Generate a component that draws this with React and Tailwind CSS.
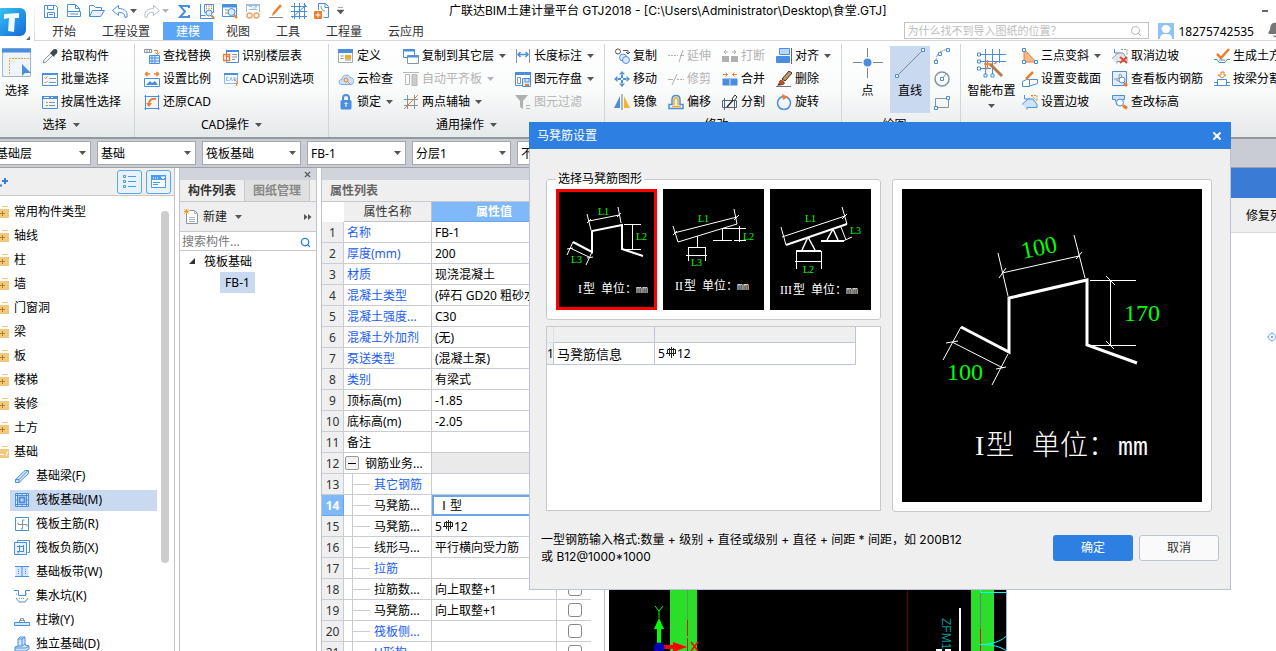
import React from "react";
import { Search, X, Bell } from "lucide-react";

const B = "#4a8fdf";
const O = "#ee7d2c";
const G = "#87949e";

const icons = {
  save: <g stroke={B} fill="none"><path d="M1.5 2.5h11l2 2v10h-13z" /><path d="M4.5 2.5v4h6v-4M4.5 14.5v-5h7v5M6 11.5h4" /></g>,
  doc: <g stroke={B} fill="none"><path d="M1.5 8.5v-7h8l4 4v3M9.5 1.5v4h4M1.5 8.5h13v5h-13zM4 11h8" /></g>,
  open: <g stroke={B} fill="none"><path d="M.5 13.5v-11h4l2 2h6v3" /><path d="M.5 13.5l3-6h12l-4 6z" fill="#e8f2fd" /></g>,
  undo: <path d="M6.5 2.5l-6 5 6 5v-3c4-.5 6 1 6.5 5l2-.5c1-5-2-8.5-8.5-8.5z" stroke={B} fill="none" />,
  redo: <path d="M9.5 2.5l6 5-6 5v-3c-4-.5-6 1-6.5 5l-2-.5c-1-5 2-8.5 8.5-8.5z" stroke="#b9bec4" fill="none" />,
  sum: <path d="M13 5V3H4l5 5.5L4 14h9v-2" stroke={B} strokeWidth="2" fill="none" />,
  gridFind: <g fill="none" stroke={B}><path d="M1.5 1v14.5h14M1.5 12.5h5M5.5 1.5h9v8h-9z" /><path d="M7 3h1M9.5 3h1M12 3h1M7 5.5h1M9.5 5.5h1M12 5.5h1" stroke={O} strokeWidth="1.5" /><circle cx="10" cy="10" r="3" fill="#dbe9f9" /><path d="M12.5 12.5l2.5 2.5" stroke={O} strokeWidth="2" /></g>,
  winFind: <g fill="none" stroke={B}><path d="M.5 1.5h14v12H.5z" /><path d="M.5 3h14" strokeWidth="3" /><path d="M3 7h3M3 10h3" stroke={G} /><circle cx="9.5" cy="9" r="3.5" fill="#dbe9f9" /><path d="M12 12l3 3" stroke={O} strokeWidth="2" /></g>,
  glasses: <g fill="none" stroke="#9dbfe6"><path d="M1.5 9V1.5h13V9M4 3.5h3M10 3.5h2M7.5 5h4M4 6.5h8" /><path d="M1 2h14" strokeWidth="2" /><g stroke="#f0a36a" strokeWidth="1.5"><circle cx="4.5" cy="12.5" r="2.5" /><circle cx="11.5" cy="12.5" r="2.5" /></g></g>,
  pen: <g fill="none"><path d="M1 14.5h14" stroke="#888" /><path d="M6 10l7-8" stroke={O} strokeWidth="2.5" /><path d="M4 13l3-2-2-2z" fill={O} /></g>,
  hatch: <g stroke={B} fill="none"><path d="M3.5 0v16M8.5 0v16M13.5 0v16M0 3.5h16M0 8.5h16M0 13.5h16M1 15L15 2" /></g>,
  docPlus: <g fill="none" stroke={B}><path d="M4.5 7V.5h7l3 3v11h-5" /><path d="M11 .5v4h4" /><path d="M7 3c0 3 1 4 4 5" stroke={G} /><path d="M.5 8.5h7v7h-7z" fill={O} stroke={O} /><path d="M4 9.5v5M1.5 12h5" stroke="#fff" /></g>,
  dropper: <g><path d="M1 15l1-3 7-7 2 2-7 7z" fill="#f5f7f8" stroke="#8b979f" /><path d="M8 5l4 4 1-2c2-1 3-3 2-5s-4-1-5 1z" fill="#3e4a54" /></g>,
  batch: <g fill="none" stroke={B}><path d="M.5 2.5h15v12H.5z" /><path d="M0 3h16" strokeWidth="2" /><path d="M2.5 6.5l1 1 2-2M2.5 11l1 1 2-2" stroke={O} /><path d="M7 7.5h7M7 11.5h7" stroke={G} /></g>,
  props: <g fill="none" stroke={B}><path d="M.5 2.5h15v12H.5z" /><path d="M0 3.5h16" strokeWidth="3" /><path d="M2 3.5h5M9 3.5h2" stroke="#fff" /><path d="M4 8.5h2M7 8.5h6M4 11.5h2M7 11.5h6" stroke={G} /></g>,
  replace: <g fill="none" stroke={B}><path d="M.5 1.5h7v3h-7zM3 1.5v3M5.5 1.5v3" stroke={G} /><path d="M10 2.5h3.5v3M11.5 4.5l2 2 2-2" stroke={O} /><path d="M5.5 7.5h10v8h-10zM8 7.5v8M11 7.5v8M5.5 10h10M5.5 13h10" fill="#dceafa" /></g>,
  floorTable: <g fill="none" stroke={B}><path d="M3.5 2.5h12v12h-12z" fill="#fff" /><path d="M3 3h13" strokeWidth="2" /><path d="M9 6.5h5M9 9h5M9 11.5h3" stroke={G} /><path d="M.5 6.5h6v6h-6zM2.5 8.5h4" stroke={O} strokeWidth="1.5" /></g>,
  scale: <g fill="none"><path d="M1 3h5M10 3h5M3.5 1L1.5 3l2 2M12.5 1l2 2-2 2" stroke={O} strokeWidth="1.5" /><path d="M.5 7.5h15v8H.5z" stroke={B} /><path d="M2 14l4-4 2 2 3-2 3 4z" fill={B} /></g>,
  cadOption: <g fill="none" stroke="#8db8ea"><path d="M1.5 2.5h13v10h-13z" /><path d="M1 3h14" stroke={B} strokeWidth="2" /><path d="M5.5 6.5h-2v3h2M6.5 10l1.5-3.5L9.5 10M11 6.5v3c3 0 3-3 0-3" /><path d="M11 8l4 4-2 .5 1 2.5" stroke={O} /></g>,
  restore: <g fill="none"><path d="M1.5 2.5h13v12h-13zM.5 2.5h15M1.5 1v15M14.5 1v15M.5 14.5h15" stroke={B} /><path d="M5 10c0-4 3-6 7-5" stroke={O} strokeWidth="2" /><path d="M2 9h6l-3 4z" fill={O} /></g>,
  define: <g fill="none" stroke={B}><path d="M.5 1.5h14v13H.5z" stroke="#9aa8b3" fill="#fff" /><path d="M0 3h15" strokeWidth="4" /><path d="M2.5 8h3M2.5 10.5h3M7 12h6" stroke={G} /><path d="M7 7h6v4H7z" fill="#f5a623" stroke="none" /></g>,
  cloud: <g><path d="M4 13.500c-4 0-4-5 0-5 0-5 7-6 8-2 5 0 5 6 1 7z" fill="#cfe1f8" stroke="#7aaceb" /><circle cx="8" cy="9" r="2" fill="none" stroke={O} /><path d="M9.5 10.5l3 3" stroke={O} /></g>,
  lock: <g><path d="M5 7V4c0-4 6-4 6 0v3" fill="none" stroke={B} strokeWidth="2" /><rect x="2.5" y="6" width="11" height="9.5" rx="1.5" fill={B} /><path d="M8 9v4M6.5 10L8 8.5 9.5 10" stroke="#fff" fill="none" /></g>,
  layers: <g fill="none"><path d="M.5 1.5h11v8H.5z" stroke={B} fill="#fff" /><path d="M0 2.5h12" stroke={B} strokeWidth="2" /><path d="M4.5 7.5h11v8h-11z" stroke={G} fill="#fff" /><path d="M4 8.5h12" stroke={B} strokeWidth="2" /></g>,
  alignGray: <g stroke="#b8b8b8" fill="none"><path d="M0 1.5h16M2.5 3.5h4v10h-4z" /><path d="M9 3.5h5v11H9z" fill="#ccc" /></g>,
  twoAxis: <g fill="none" stroke={G}><path d="M4.5 1v14M11.5 1v14M1 5.5h14M1 11.5h14" /><path d="M1 15L15 1" stroke={O} /></g>,
  dimension: <g fill="none"><path d="M1.5 1v14M14.5 1v14" stroke={G} /><path d="M4 6.5h8M5.5 4L3 6.5 5.5 9M10.5 4L13 6.5 10.5 9" stroke={B} strokeWidth="1.5" /></g>,
  store: <g fill="none" stroke={B}><path d="M.5 1.5h15v13H.5z" fill="#fff" /><path d="M0 2.5h16" strokeWidth="3" /><path d="M2.5 6.5h3v6h-3z" stroke={G} /><path d="M7.5 7.5h8v8h-8z" fill="#dceafa" /><path d="M10 8v3h4V8" /><path d="M10 13h4v2h-4z" fill={O} stroke="none" /></g>,
  filter: <g fill="#b0b0b0"><path d="M0 1h13l-5 6v8l-3-2V7z" /><path d="M11 11h4v1h-4zM11 14h4v1h-4z" /></g>,
  copy: <g fill="#fff" stroke="#555"><circle cx="4" cy="3.5" r="2.5" /><path d="M9 2.5h5v3M12 4l2 2 2-2" fill="none" /><g fill="#dceafa" stroke={B}><circle cx="9" cy="9.5" r="3.5" /><circle cx="12" cy="12" r="3.5" /></g></g>,
  move: <g fill={B}><path d="M8 0l3 3.5H5zM8 16l3-3.5H5zM0 8l3.5-3v6zM16 8l-3.5-3v6zM7 4h2v3H7zM7 9h2v3H7zM4 7h3v2H4zM9 7h3v2H9z" /></g>,
  mirror: <g><path d="M6 2v12H0z" fill={B} /><path d="M10 2v12h6z" fill="#f5b32e" /><path d="M8 0v16" stroke="#777" /></g>,
  extend: <g stroke="#b0b0b0" fill="none"><path d="M0 7.5h10" strokeDasharray="2 1" /><path d="M15 2l-4 12M12 7.5h4" /></g>,
  trim: <g stroke="#b0b0b0" fill="none"><path d="M0 8.5h5" /><path d="M9 8.5h7" strokeDasharray="2 1" /><path d="M4 14l5-11" /></g>,
  offset: <g fill="none" strokeWidth="1.5"><path d="M1 14.5h14v-4h-3V6c0-6-8-6-8 0v4.5H1z" stroke={B} /><path d="M4 12.5h9M6 11V6c0-3 4-3 4 0v5" stroke="#f5a623" /></g>,
  breakGray: <g fill="#b0b0b0"><path d="M0 8h7v6H0zM9 8h7v6H9z" /><path d="M2 4h4M10 4h4M4 2L2 4l2 2M12 2l2 2-2 2" stroke="#b0b0b0" fill="none" /></g>,
  merge: <g><path d="M.5 7.5h15v7H.5z" fill={B} /><path d="M8 8v6" stroke="#d9e8fa" /><path d="M1 3.5h4M11 3.5h4M3.5 1.5l2 2-2 2M12.5 1.5l-2 2 2 2" stroke={O} fill="none" /></g>,
  split: <g fill="none"><path d="M.5 6.5h14v7H.5zM2.5 4v12M12.5 6v10" stroke="#50657f" /><path d="M5 13l7-8" stroke="#333" strokeWidth="1.5" /><path d="M10 5l3-4 2 2-3 4z" fill="#fff" stroke="#333" /></g>,
  alignTo: <g><path d="M3.5.5h10v6h-10z" fill="#b9d7fa" stroke={B} /><path d="M.5 8.5h13v6H.5z" fill={B} stroke={B} /><path d="M15.5 0v16" stroke="#666" /></g>,
  brush: <g><path d="M6 8l7-8 3 2-7 8z" fill="#c9975a" stroke="#333" /><path d="M5 9l4 3c-1 2-4 2.500-8 2.500 2-1 2-5 4-5.500z" fill="#33312f" /><circle cx="5.5" cy="11.5" r="2.5" fill="#bd4d21" /><path d="M0 15.5h15" stroke="#777" /></g>,
  rotate: <g fill="none"><circle cx="8" cy="9" r="6.5" stroke={B} strokeWidth="1.5" /><path d="M6 0l6 3-5 3z" fill={O} /></g>,
  arc: <g fill="none" stroke={G}><path d="M2 14C2 6 6 2 14 1.5" strokeDasharray="4 1" /><path d="M.5 12.5h3v3h-3zM4.5 4.5h3v3h-3zM12.5.5h3v3h-3z" stroke={B} fill="#fff" /></g>,
  circle: <g fill="none" stroke={G}><circle cx="8" cy="8" r="7" strokeWidth="1.5" /><path d="M8 8l4-5" /><path d="M6.5 6.5h3v3h-3z" stroke={B} fill="#fff" /></g>,
  rect: <g fill="none" stroke={G}><path d="M1.5 4.5h13v9h-13z" /><path d="M.5 12.5h3v3h-3zM12.5 2.5h3v3h-3z" stroke={B} fill="#fff" /></g>,
  slope3: <g fill="none" stroke={B}><path d="M2 1v13h12z" fill="#f6b68b" stroke={O} /><path d="M.5.5h3v3h-3zM.5 12.5h3v3h-3zM12.5 12.5h3v3h-3z" fill="#fff" /></g>,
  section: <g fill="none" stroke={B}><path d="M.5 15.5v-5l4-2h3v7zM8 8.5h7.5v4L8 15" /><path d="M4 8l7-7" stroke={O} strokeWidth="2.5" /></g>,
  slopeSet: <g fill="none" stroke={B}><path d="M2.5 1v4h6" /><path d="M0 10.5l6-5.500h5l4 5.500v3H5v2" fill="#cfe2f8" /><path d="M9 1.5h6v6M9 1.5l6 5" stroke={O} strokeDasharray="2 1" /></g>,
  slopeCancel: <g fill="none" stroke={B}><path d="M2.5 1v4h6" /><path d="M0 10.5l6-5.500h5l4 5.500v3H5v2" stroke={G} fill="#e2e5e8" /><path d="M9 1.5h6v6" stroke={G} strokeDasharray="2 1" /><path d="M8 9l7 6M15 9l-7 6" stroke="#dc4a32" strokeWidth="2" /></g>,
  viewRebar: <g fill="none" stroke={B}><path d="M.5.5h14v14H.5z" fill="#e6f0fb" /><path d="M2 8h4c2 0 0-5 2-5s2 5 0 7c-2 1-3-1-4-1" stroke={G} /><circle cx="10" cy="9" r="3" fill="#fff" /><path d="M12 12l3 3" stroke={O} strokeWidth="3" /></g>,
  elevation: <g fill="none" stroke={B}><path d="M.5 1.5h12v4h-2l-1 5h-5l-1-5h-3z" fill="#cfe2f8" /><circle cx="8" cy="8.5" r="3.5" fill="#fff" /><path d="M11 11.5l4 3" stroke={O} strokeWidth="3" /></g>,
  earthwork: <g fill="none"><path d="M3 6l4 4 8-9" stroke={O} strokeWidth="2.5" /><path d="M0 11.5h3l2 3h6l2-3h3M5 12h6" stroke={B} /></g>,
  beamSplit: <g fill="none" stroke={B}><path d="M3.5 8.5h9v6h-9zM0 11.5h3M13 11.5h3M0 14.5h16" /><path d="M7 1h3v3h2l-4 3-4-3h3z" stroke={O} /></g>,
  beamF: <g fill="#d5e6fa" stroke={B}><path d="M1.5 11.500L11 2.500h3.500v3L5 14.500H1.5z" /><path d="M1.5 11.500H5v3M5 11.500l9-9" fill="none" /></g>,
  raft: <g fill="none" stroke={B}><path d="M1.5 1.5h13v13h-13z" fill="#d5e6fa" /><path d="M5.5 5.5h5v5h-5z" strokeWidth="2" fill="#c9d9f0" /><path d="M3.5 1v14M12.5 1v14M1 3.5h14M1 12.5h14" /><path d="M8 1v3M8 12v3M1 8h3M12 8h3" /></g>,
  mainRebar: <g fill="none" stroke={B}><path d="M1.5 1.5h13v13h-13z" /><path d="M4 8.500h9M8.500 4v9M8.500 4h2M8.500 13h-2M4 8.500v-2M13 8.500v2" stroke={G} /></g>,
  negRebar: <g fill="#e8f2fd" stroke={B}><path d="M3.5 2.500V.5h12v12h-2" fill="none" /><path d="M.5 2.5h12v12H.5z" /><path d="M3 6.500h7M3 11.500h7M5.500 5v6c0 1-1 2-2 2M9.500 5v7" fill="none" /></g>,
  strip: <g fill="#d5e6fa" stroke={B}><path d="M1.5 3h13v10h-13z" stroke="none" /><path d="M1 2.5h14M1 12.5h14M8 3v10" /><path d="M4.5 5v6M11.5 5v6" strokeDasharray="1 1" /></g>,
  pit: <g fill="none" stroke={B}><path d="M0 2.5h4.5v5h7v-5H16M2 10l3 4h6l3-4" /><path d="M2 6h2M12 6h2M5 10.500h6" stroke={G} strokeDasharray="1 1" /></g>,
  pier: <g fill="none" stroke={B}><path d="M.5 10.5h15v3H.5z" fill="#d5e6fa" /><path d="M5.500 10V8.500h5V10M6.500 8.500v-2h3v2" stroke={G} /></g>,
  isolated: <g fill="#d5e6fa" stroke={B}><path d="M1 11l3-1V3l2-2h5v8l4 1v3l-3 2H1z" /><path d="M4 10h4l3-2M8 3v7M4 3h4l3-2M1 12h11l3-2" fill="none" /></g>,
};

function Icon({ name, className = "h-4 w-4" }) {
  return (
    <svg viewBox="0 0 16 16" className={`${className} shrink-0`} aria-hidden="true">
      {icons[name]}
    </svg>
  );
}

function Caret({ light }) {
  return (
    <svg viewBox="0 0 7 4" className="h-1 w-[7px] shrink-0" aria-hidden="true">
      <path d="M0 0h7L3.5 4z" fill={light ? "#b5b5b5" : "#555"} />
    </svg>
  );
}

function Tool({ icon, label, caret, disabled }) {
  return (
    <button
      disabled={disabled}
      className="flex h-[23px] items-center gap-[3px] whitespace-nowrap text-black disabled:text-[#b3b3b3]"
    >
      <Icon name={icon} />
      <span>{label}</span>
      {caret && <span className="ml-[2px] flex"><Caret light={disabled} /></span>}
    </button>
  );
}

function Group({ label, className, children }) {
  return (
    <section className={`flex shrink-0 flex-col border-r border-[#d3d6d9] ${className}`}>
      <div className="flex h-[69px]">{children}</div>
      <button className="flex h-[25px] items-center justify-center gap-[6px]">
        {label}
        {label && <Caret />}
      </button>
    </section>
  );
}

const tabs = ["开始", "工程设置", "建模", "视图", "工具", "工程量", "云应用"];

function Header() {
  return (
    <header className="flex h-[41px] shrink-0 bg-white">
      <div className="relative w-[35px] shrink-0">
        <svg viewBox="0 0 35 41" className="h-[41px] w-[35px]" aria-hidden="true">
          <defs>
            <linearGradient id="logo" x1="0" y1="0" x2="1" y2="1">
              <stop offset="0" stopColor="#35c8f5" />
              <stop offset="1" stopColor="#1668d8" />
            </linearGradient>
            <linearGradient id="edge" x1="0" y1="0" x2="0" y2="1">
              <stop offset="0" stopColor="#fff" />
              <stop offset="1" stopColor="#d5d7da" />
            </linearGradient>
          </defs>
          <rect x="-4" y="8" width="30" height="28" rx="6" fill="url(#logo)" />
          <path d="M4 14l15-1v5h-4l-1 14-6-1 1-13-5 1z" fill="#eef9ff" />
          <path d="M30 36v4h-4z" fill="#666" />
          <rect x="34" y="0" width="1" height="41" fill="url(#edge)" />
        </svg>
      </div>
      <div className="flex min-w-0 flex-1 flex-col">
        <div className="flex h-[21px] shrink-0 items-center pl-2">
          <div className="flex items-center gap-[7px]">
            <Icon name="save" />
            <Icon name="doc" />
            <Icon name="open" />
            <Icon name="undo" />
            <span className="-ml-[5px] flex"><Caret /></span>
            <Icon name="redo" />
            <span className="-ml-[5px] flex"><Caret light /></span>
            <Icon name="sum" />
            <Icon name="gridFind" />
            <Icon name="winFind" />
            <Icon name="glasses" />
            <Icon name="pen" />
            <Icon name="hatch" />
            <Icon name="docPlus" />
            <svg viewBox="0 0 7 7" className="h-[7px] w-[7px]" aria-hidden="true">
              <path d="M1 .5h5M0 3h7L3.5 7z" fill="#555" stroke="#555" strokeWidth=".5" />
            </svg>
          </div>
          <h1 className="ml-[105px] font-['Inter','Noto_Sans_CJK_SC',sans-serif] whitespace-nowrap">
            广联达BIM土建计量平台 GTJ2018 - [C:\Users\Administrator\Desktop\食堂.GTJ]
          </h1>
          <button aria-label="最小化" className="mr-2 ml-auto h-[2px] w-[6px] bg-[#666]" />
        </div>
        <div className="flex h-5 shrink-0 items-end border-b border-[#d5d7da] pl-1">
          <nav className="flex">
            {tabs.map((t) => (
              <a
                key={t}
                href="#"
                className={`flex h-[18px] items-center px-[13px] pt-[2px] ${t === "建模" ? "bg-[#5ba5f7] text-white" : "text-[#333]"}`}
              >
                {t}
              </a>
            ))}
          </nav>
          <label className="mb-px ml-auto flex h-[17px] w-[245px] items-center border border-[#c4c4c4] px-[2px]">
            <input
              aria-label="搜索"
              placeholder="为什么找不到导入图纸的位置？"
              className="min-w-0 flex-1 text-[11px] leading-[15px] outline-none placeholder:text-[#bdbdbd]"
            />
            <Search className="mr-1 h-3 w-3 text-[#b5b5b5]" />
          </label>
          <svg viewBox="0 0 16 16" className="mb-px ml-[9px] h-4 w-4 shrink-0" aria-hidden="true">
            <path d="M0 0h16v16H0z" fill="#8fc3f7" />
            <circle cx="8" cy="6" r="4" fill="#fff" />
            <path d="M3 5h10v1H3zM2 16c0-4 2-5 6-5s6 1 6 5z" fill="#fff" />
          </svg>
          <span className="ml-1 leading-[17px]">18275742535</span>
          <span className="ml-[13px] w-[9px] overflow-hidden pb-[2px]">
            <Bell className="h-4 w-4 fill-[#777] text-[#777]" />
          </span>
        </div>
      </div>
    </header>
  );
}

function Ribbon() {
  return (
    <div className="flex h-[98px] shrink-0 overflow-hidden border-b-2 border-[#94989d] bg-linear-to-b from-white via-[#fafbfb] to-[#e6e9ea] pt-[3px]">
      <Group label="选择" className="w-[135px] pr-3">
        <button className="flex w-[42px] shrink-0 flex-col items-start gap-[5px] pt-1 pl-[2px]">
          <svg viewBox="0 0 30 30" className="h-[30px] w-[30px]" aria-hidden="true">
            <path d="M.5.5h28v28H.5z" fill="#eef4fb" stroke="#9db8d3" />
            <path d="M0 2.5h29" stroke={B} strokeWidth="4" />
            <path d="M27 10.5H7.5V27" fill="none" stroke="#f5a623" strokeDasharray="2 1" />
            <path d="M20 16v12l3-3h6z" fill={B} />
          </svg>
          <span className="pl-[3px]">选择</span>
        </button>
        <div>
          <Tool icon="dropper" label="拾取构件" />
          <Tool icon="batch" label="批量选择" />
          <Tool icon="props" label="按属性选择" />
        </div>
      </Group>
      <Group label="CAD操作" className="w-[194px]">
        <div className="mr-[9px] w-[79px] shrink-0 pl-[9px]">
          <Tool icon="replace" label="查找替换" />
          <Tool icon="scale" label="设置比例" />
          <Tool icon="restore" label="还原CAD" />
        </div>
        <div>
          <Tool icon="floorTable" label="识别楼层表" />
          <Tool icon="cadOption" label="CAD识别选项" />
        </div>
      </Group>
      <Group label="通用操作" className="w-[276px]">
        <div className="w-[74px] shrink-0 pl-[9px]">
          <Tool icon="define" label="定义" />
          <Tool icon="cloud" label="云检查" />
          <Tool icon="lock" label="锁定" caret />
        </div>
        <div className="w-[112px] shrink-0">
          <Tool icon="layers" label="复制到其它层" caret />
          <Tool icon="alignGray" label="自动平齐板" caret disabled />
          <Tool icon="twoAxis" label="两点辅轴" caret />
        </div>
        <div>
          <Tool icon="dimension" label="长度标注" caret />
          <Tool icon="store" label="图元存盘" caret />
          <Tool icon="filter" label="图元过滤" disabled />
        </div>
      </Group>
      <Group label="修改" className="w-[237px]">
        <div className="w-[63px] shrink-0 pl-[9px]">
          <Tool icon="copy" label="复制" />
          <Tool icon="move" label="移动" />
          <Tool icon="mirror" label="镜像" />
        </div>
        <div className="w-[54px] shrink-0">
          <Tool icon="extend" label="延伸" disabled />
          <Tool icon="trim" label="修剪" disabled />
          <Tool icon="offset" label="偏移" />
        </div>
        <div className="w-[54px] shrink-0">
          <Tool icon="breakGray" label="打断" disabled />
          <Tool icon="merge" label="合并" />
          <Tool icon="split" label="分割" />
        </div>
        <div>
          <Tool icon="alignTo" label="对齐" caret />
          <Tool icon="brush" label="删除" />
          <Tool icon="rotate" label="旋转" />
        </div>
      </Group>
      <Group label="绘图" className="w-[119px]">
        <button className="flex w-12 shrink-0 flex-col items-center gap-[5px] pt-1 pl-[3px]">
          <svg viewBox="0 0 30 30" className="h-[30px] w-[30px]" aria-hidden="true">
            <path d="M14.5 0v30M0 14.5h30" stroke="#7b8790" />
            <circle cx="14.5" cy="14.5" r="5.5" fill="#fff" />
            <circle cx="14.5" cy="14.5" r="4" fill={B} />
          </svg>
          点
        </button>
        <button className="mt-[2px] flex h-[67px] w-10 shrink-0 flex-col items-center gap-[5px] bg-[#c9d9f0] pt-[2px]">
          <svg viewBox="0 0 30 30" className="h-[30px] w-[30px]" aria-hidden="true">
            <path d="M3 27L27 3" stroke="#7b8790" />
            <path d="M.5 26.5h3v3h-3zM26.5.5h3v3h-3z" fill="#fff" stroke={B} />
          </svg>
          直线
        </button>
        <div className="ml-1">
          <div className="flex h-[23px] items-center"><Icon name="arc" /></div>
          <div className="flex h-[23px] items-center"><Icon name="circle" /></div>
          <div className="flex h-[23px] items-center"><Icon name="rect" /></div>
        </div>
      </Group>
      <div className="flex min-w-0 flex-1 overflow-hidden">
        <button className="flex w-[61px] shrink-0 flex-col items-center gap-[5px] pt-1">
          <svg viewBox="0 0 30 30" className="h-[30px] w-[30px]" aria-hidden="true">
            <path d="M8.5 1v25M15.5 1v25M22.5 1v14M2 6.5h27M2 13.5h27M2 20.5h12" stroke={B} fill="none" />
            <path d="M.5 5h3v3h-3zM.5 12h3v3h-3zM.5 19h3v3h-3zM7 26h3v3H7zM14 26h3v3h-3z" fill="#fff" stroke={B} />
            <path d="M13 16l12 12" stroke="#b87a4a" strokeWidth="3" />
            <path d="M7 16h7M10.5 12v8M17 16l3-2M8 22l2-2" stroke={O} strokeWidth="1.5" />
          </svg>
          <span className="whitespace-nowrap">智能布置</span>
          <Caret />
        </button>
        <div className="w-[90px] shrink-0">
          <Tool icon="slope3" label="三点变斜" caret />
          <Tool icon="section" label="设置变截面" />
          <Tool icon="slopeSet" label="设置边坡" />
        </div>
        <div className="w-[102px] shrink-0">
          <Tool icon="slopeCancel" label="取消边坡" />
          <Tool icon="viewRebar" label="查看板内钢筋" />
          <Tool icon="elevation" label="查改标高" />
        </div>
        <div>
          <Tool icon="earthwork" label="生成土方" />
          <Tool icon="beamSplit" label="按梁分割" />
        </div>
      </div>
    </div>
  );
}

const combos = ["基础层", "基础", "筏板基础", "FB-1", "分层1", "不..."];

function FilterBar() {
  return (
    <div className="flex h-[29px] shrink-0 items-center gap-[6px] overflow-hidden border-b border-[#9ea1a6] bg-[#c9ccd2]">
      {combos.map((c, i) => (
        <div
          key={c}
          className={`flex h-6 w-[99px] shrink-0 items-center border border-[#a5a8ad] bg-white pr-1 ${i === 0 ? "-ml-2" : ""}`}
        >
          <select aria-label={c} className="min-w-0 flex-1 appearance-none pt-[2px] pl-[3px] leading-5 outline-none">
            <option>{c}</option>
          </select>
          <Caret />
        </div>
      ))}
    </div>
  );
}

const categories = ["常用构件类型", "轴线", "柱", "墙", "门窗洞", "梁", "板", "楼梯", "装修", "土方", "基础"];
const foundations = [
  ["beamF", "基础梁(F)"],
  ["raft", "筏板基础(M)"],
  ["mainRebar", "筏板主筋(R)"],
  ["negRebar", "筏板负筋(X)"],
  ["strip", "基础板带(W)"],
  ["pit", "集水坑(K)"],
  ["pier", "柱墩(Y)"],
  ["isolated", "独立基础(D)"],
];

function Navigator() {
  return (
    <aside className="flex w-[175px] shrink-0 flex-col overflow-hidden border-r border-[#bfc3ca] bg-white">
      <div className="flex h-7 shrink-0 items-center gap-1 border-b border-[#c6c9ce] bg-[#efefef] pr-[3px]">
        <svg viewBox="0 0 9 10" className="mr-auto h-[10px] w-[9px]" aria-hidden="true">
          <path d="M5 1v6M2 4h6M0 8.5h2" stroke="#2f7fdb" strokeWidth="2" />
        </svg>
        <button aria-label="列表" className="flex h-6 w-[25px] items-center justify-center rounded-[3px] border border-[#5ba5f7] bg-[#e9f3fe]">
          <svg viewBox="0 0 14 14" className="h-[14px] w-[14px]" aria-hidden="true">
            <path d="M.5.5h2v2h-2zM.5 5.5h2v2h-2zM.5 10.5h2v2h-2zM5 1.5h8M5 6.5h8M5 11.5h8" fill="none" stroke="#4a9bf5" />
          </svg>
        </button>
        <button aria-label="窗口" className="flex h-6 w-[25px] items-center justify-center rounded-[3px] border border-[#5ba5f7] bg-[#e9f3fe]">
          <svg viewBox="0 0 16 14" className="h-[14px] w-4" aria-hidden="true">
            <path d="M.5.5h14v12H.5z" fill="#fff" stroke="#4a9bf5" />
            <path d="M0 2.5h15" stroke="#4a9bf5" strokeWidth="5" />
            <path d="M2 3h1M4 3h1M6 3h1M10 2h4l-2 2z" stroke="#fff" fill="#fff" />
            <path d="M2 7.5h7M2 9.5h5" stroke="#4a9bf5" />
          </svg>
        </button>
      </div>
      <div className="flex min-h-0 flex-1">
        <ul className="min-w-0 flex-1 overflow-hidden pt-1">
          {categories.map((c) => (
            <li key={c} className="flex h-6 items-center gap-[5px]">
              <svg viewBox="0 0 9 12" className="h-3 w-[9px] shrink-0" aria-hidden="true">
                <path d="M0 3h9v9H0z" fill="#f0c97c" />
                <path d="M2 .5h6" stroke="#f0c97c" />
                {c === "基础" ? (
                  <path d="M0 8.5h4M8 5L6 10" stroke="#fff" />
                ) : (
                  <path d="M0 7.5h5M2.5 5v5" stroke="#b5802a" />
                )}
              </svg>
              {c}
            </li>
          ))}
          {foundations.map(([icon, label]) => (
            <li key={label} className="flex h-6 items-center pl-[10px]">
              <a
                href="#"
                className={`flex h-[21px] w-[147px] items-center gap-[6px] pl-1 ${icon === "raft" ? "bg-[#c9d9f0]" : ""}`}
              >
                <Icon name={icon} />
                {label}
              </a>
            </li>
          ))}
        </ul>
        <div className="mt-[15px] mr-[5px] h-[352px] w-2 shrink-0 rounded-full bg-[#cdcdcd]" />
      </div>
    </aside>
  );
}

function ComponentList() {
  return (
    <section className="flex w-[138px] shrink-0 flex-col border-x border-[#bfc3ca] bg-white">
      <div className="flex h-3 shrink-0 items-center justify-end bg-[#d1d4da] pr-1">
        <X className="h-[9px] w-[9px] text-[#555]" strokeWidth={3} />
      </div>
      <div className="flex h-[22px] shrink-0 border-b border-[#c6c9ce] bg-[#efefef] font-bold">
        <button className="w-[65px] border-r border-[#c6c9ce] text-[#333]">构件列表</button>
        <button className="w-[65px] border-r border-[#c6c9ce] bg-[#e0e0e0] text-[#888]">图纸管理</button>
      </div>
      <div className="flex h-[30px] shrink-0 items-center border-b border-[#c6c9ce] bg-[#efefef] pr-1 pl-1">
        <button className="flex items-center gap-1 text-[#222]">
          <svg viewBox="0 0 15 15" className="h-[15px] w-[15px]" aria-hidden="true">
            <path d="M2.5 3.5v11h11v-10l-3-3h-5" fill="#fff" stroke={G} />
            <path d="M10.5 1.5v3h3M5 8.5h6M5 10.5h6M5 12.5h6" fill="none" stroke="#aab4bb" />
            <path d="M0 2.5h5M2.5 0v5M.5.5l4 4M4.5.5l-4 4" stroke="#f5a030" />
          </svg>
          新建
          <span className="ml-1 flex"><Caret /></span>
        </button>
        <svg viewBox="0 0 8 6" className="ml-auto h-[6px] w-2" aria-hidden="true">
          <path d="M0 0l3.5 3L0 6zM4 0l3.5 3L4 6z" fill="#555" />
        </svg>
      </div>
      <label className="flex h-[19px] shrink-0 items-center border-b border-[#c6c9ce] pt-[2px] pr-[5px] pl-[2px]">
        <input aria-label="搜索构件" placeholder="搜索构件..." className="min-w-0 flex-1 leading-4 outline-none placeholder:text-[#777]" />
        <Search className="h-[11px] w-[11px] text-[#2b86cf]" strokeWidth={3} />
      </label>
      <div className="flex h-[21px] items-center gap-2 pl-[9px]">
        <svg viewBox="0 0 7 7" className="h-[7px] w-[7px]" aria-hidden="true">
          <path d="M6 0v6H0z" fill="#333" />
        </svg>
        筏板基础
      </div>
      <div className="ml-10 flex h-[21px] w-[35px] items-center justify-center bg-[#c9d9f0]">FB-1</div>
    </section>
  );
}

// blue = public attribute, child = row below the rebar group
const attributes = [
  { name: "名称", value: "FB-1", blue: true },
  { name: "厚度(mm)", value: "200", blue: true },
  { name: "材质", value: "现浇混凝土", blue: true },
  { name: "混凝土类型", value: "(碎石 GD20 粗砂水泥", blue: true },
  { name: "混凝土强度...", value: "C30", blue: true },
  { name: "混凝土外加剂", value: "(无)", blue: true },
  { name: "泵送类型", value: "(混凝土泵)", blue: true },
  { name: "类别", value: "有梁式", blue: true },
  { name: "顶标高(m)", value: "-1.85" },
  { name: "底标高(m)", value: "-2.05" },
  { name: "备注", value: "" },
  { name: "钢筋业务...", value: "", group: true },
  { name: "其它钢筋", value: "", blue: true, child: true },
  { name: "马凳筋...", value: "Ⅰ型", child: true, active: true },
  { name: "马凳筋...", value: "rebar", child: true },
  { name: "线形马...", value: "平行横向受力筋", child: true },
  { name: "拉筋", value: "", blue: true, child: true },
  { name: "拉筋数...", value: "向上取整+1", child: true },
  { name: "马凳筋...", value: "向上取整+1", child: true },
  { name: "筏板侧...", value: "", blue: true, child: true },
  { name: "U形构...", value: "", blue: true, child: true },
];

function RebarSpec() {
  return (
    <span className="flex items-center gap-px">
      5
      <svg viewBox="0 0 10 11" className="mb-[3px] h-[11px] w-[10px]" aria-label="C">
        <path d="M5.5 0v11M1.5 2.5h8v4h-8zM0 6.5h10M3.5 1v8M7.5 1v8" fill="none" stroke="#222" />
      </svg>
      12
    </span>
  );
}

function AttributeTable() {
  return (
    <section className="flex w-[284px] shrink-0 flex-col overflow-hidden border-x border-[#bfc3ca] bg-white">
      <div className="h-3 shrink-0 bg-[#d1d4da]" />
      <h2 className="flex h-[22px] shrink-0 items-center border-b border-[#c6c9ce] bg-[#efefef] pl-2 font-bold text-[#666]">
        属性列表
      </h2>
      <table className="w-[269px] table-fixed border-separate border-spacing-0">
        <thead>
          <tr className="h-5">
            <th className="w-[22px]" />
            <th className="w-[88px] border-r border-b border-[#bfc3ca] bg-[#efefef] p-0 pt-px font-normal text-[#333]">属性名称</th>
            <th className="w-[125px] border-r border-b border-[#6ba6e8] bg-[#7fb9fa] p-0 pt-px font-bold text-white">属性值</th>
            <th className="border-b border-[#bfc3ca] bg-[#efefef] p-0 font-normal">附加</th>
          </tr>
        </thead>
        <tbody>
          {attributes.map((a, i) => (
            <tr key={i} className="h-[21px]">
              <td
                className={`border-r border-b p-0 pt-[2px] text-center ${a.active ? "border-[#6ba6e8] bg-[#7fb9fa] font-bold text-white" : "border-[#c9ccd2] bg-[#efefef] text-[#333]"}`}
              >
                {i + 1}
              </td>
              <td className={`border-r border-b border-[#c9ccd2] p-0 whitespace-nowrap ${a.blue ? "text-[#1b5df5]" : ""}`}>
                <div className="flex h-5 items-center">
                  {a.group && (
                    <button aria-label="折叠" className="mr-[6px] ml-px flex h-[14px] w-[14px] items-center justify-center rounded-[2px] border border-[#999] bg-[#f2f2f2]">
                      <span className="h-px w-2 bg-black" />
                    </button>
                  )}
                  {a.child && (
                    <span className="mr-1 ml-2 flex h-full w-[18px] items-center border-l border-[#c9ccd2]">
                      <span className="h-px w-full bg-[#c9ccd2]" />
                    </span>
                  )}
                  <span className={a.group || a.child ? "pt-[2px]" : "pt-[2px] pl-[3px]"}>{a.name}</span>
                </div>
              </td>
              <td
                className={`overflow-hidden p-0 whitespace-nowrap ${a.group ? "bg-[#eaeaea]" : ""} ${a.active ? "border-2 border-[#6ba6e8] pt-px pl-1" : "border-r border-b border-[#c9ccd2] pt-[2px] pl-[3px]"}`}
              >
                {a.value === "rebar" ? <RebarSpec /> : a.value}
              </td>
              <td className="border-b border-[#c9ccd2] p-0">
                <div className="flex items-center justify-center pl-[2px]">
                  <input
                    type="checkbox"
                    aria-label={`附加 ${a.name}`}
                    className="h-[14px] w-[14px] appearance-none rounded-[3px] border border-[#8a8a8a] bg-white"
                  />
                </div>
              </td>
            </tr>
          ))}
        </tbody>
      </table>
    </section>
  );
}

function Workspace() {
  return (
    <main className="flex min-w-0 flex-1 flex-col">
      <div className="h-[30px] shrink-0 bg-[#3a7bd5]" />
      <div className="flex h-[35px] shrink-0 items-center justify-end overflow-hidden border-b border-[#d9d9d9] bg-[#efefef]">
        <button className="w-[30px] overflow-hidden pt-[2px] text-left whitespace-nowrap">修复列表</button>
      </div>
      <div className="flex min-h-0 flex-1">
        <div className="flex w-[398px] shrink-0 items-end border-r border-[#8fb0e0] bg-black">
          <svg viewBox="0 0 397 61" className="h-[61px] w-full" aria-hidden="true">
            <path d="M61 0h27v61H61z" fill="#2ade2a" />
            <path d="M78.5 0v30" stroke="#5d9a5d" />
            <path d="M78.5 30v31" stroke="#c52222" strokeDasharray="16 2" />
            <path d="M46 16l4 5 4-5M50 21v7" stroke="#0f0" fill="none" />
            <path d="M48 55V39h-3l5-11 5 11h-3v16z" fill="#0f0" />
            <path d="M51 55h13v-3l14 5-14 5v-3H51z" fill="#f00" />
            <circle cx="50" cy="58" r="5.5" fill="#0000b8" />
            <path d="M82 52l7 9M89 52l-7 9" stroke="#f00" strokeWidth="1.5" />
            <path d="M298.5 0v61" stroke="#600" />
            <text transform="translate(333 28) rotate(90)" fill="#0a9494" fontSize="12" fontFamily="Liberation Sans">ZFM1</text>
            <path d="M351 18v43" stroke="#fff" strokeWidth="2" />
            <path d="M327 60h6M336 60h6" stroke="#fff" strokeWidth="2" />
            <path d="M362 0h23v61h-23z" fill="#2ade2a" />
            <path d="M371.5 3v36" stroke="#777" />
            <path d="M371.5 39v22" stroke="#f00" />
            <path d="M371.5 0v2.5h26M371 54.5c12 0 20-3 26-8M371 54.5c12 0 20 2 26 6" stroke="#0ff" fill="none" />
          </svg>
        </div>
        <div className="flex flex-1 justify-end bg-white pt-[99px]">
          <svg viewBox="0 0 9 10" className="h-[10px] w-[9px]" aria-hidden="true">
            <circle cx="5" cy="5" r="3.5" fill="none" stroke="#7eb0f0" />
            <path d="M5 0v2M5 8v2M0 5h2" stroke="#7eb0f0" />
            <circle cx="5" cy="5" r="1" fill="#4a90e2" />
          </svg>
        </div>
      </div>
    </main>
  );
}

function ShapeLabel({ numeral, x, y }) {
  return (
    <g fill="#fff" fontSize="12">
      <text x={x} y={y} textAnchor="end" fontFamily="Liberation Serif">{numeral}</text>
      <text x={x + 1} y={y} fontFamily="Noto Sans CJK SC">型</text>
      <text x={x + 19} y={y} fontFamily="Noto Sans CJK SC">单位：</text>
      <text x={x + 54} y={y} fontSize="10" fontFamily="Liberation Mono">mm</text>
    </g>
  );
}

function Dims({ items }) {
  return (
    <g fill="#0f0" stroke="none" fontSize="10" fontFamily="Liberation Serif">
      {items.map(([t, x, y]) => (
        <text key={t} x={x} y={y}>{t}</text>
      ))}
    </g>
  );
}

function ShapePicker() {
  return (
    <fieldset className="rounded-[3px] border border-[#c6c9ce] bg-white px-[9px] pb-[9px]">
      <legend className="px-[2px] leading-[18px]">选择马凳筋图形</legend>
      <div className="flex gap-[6px] pt-px">
        <button aria-label="I型" className="h-[121px] w-[101px] outline-3 -outline-offset-3 outline-[#f00]">
          <svg viewBox="0 0 101 121" className="h-full w-full bg-black" fill="none" stroke="#fff">
            <path d="M17 53l19 10V42l30-6v24l21 7" strokeWidth="2" />
            <path d="M31 25l4 16M62 18l3 16M33 32l30-6M68 35.5h17M68 60.5h17M76.5 35v26M17 53l-6 13M36 63l-6 13M14 59l19 9M31 34l4-4M61 28l4-4M11 60l6-1M31 69l6-1" />
            <Dims items={[["L1", 42, 26], ["L2", 80, 51], ["L3", 15, 74]]} />
            <g stroke="none"><ShapeLabel numeral="I" x={26} y={104} /></g>
          </svg>
        </button>
        <button aria-label="II型" className="h-[121px] w-[101px]">
          <svg viewBox="0 0 101 121" className="h-full w-full bg-black" fill="none" stroke="#fff">
            <path d="M11 44l63-16M15 53l59-18M10 37l5 16M71 20l3 15M34.5 47v12M25 58.5h18M25.5 58v14M42.5 58v14M23 66.5h21M59.5 40v11M50 51.5h19M59 39.5h24M71 51.5h12M76.5 37v16M10 46l4-4M71 31l5-5" />
            <Dims items={[["L1", 35, 33], ["L2", 80, 51], ["L3", 28, 77]]} />
            <g stroke="none"><ShapeLabel numeral="II" x={20} y={101} /></g>
          </svg>
        </button>
        <button aria-label="III型" className="h-[121px] w-[101px]">
          <svg viewBox="0 0 101 121" className="h-full w-full bg-black" fill="none" stroke="#fff">
            <path d="M16 56l61-21M26 62h25M51 52h23" strokeWidth="2" />
            <path d="M38 48l-6 13M38 48l7 13M63 40l-6 11M63 40l5 11" strokeWidth="1.5" />
            <path d="M12 48l63-21M11 38l5 18M72 18l5 17M26.5 62v18M51.5 62v18M25 72.5h27M71 38l5 13M73 52l9-4M72 30l5-5" />
            <Dims items={[["L1", 35, 33], ["L2", 33, 84], ["L3", 80, 45]]} />
            <g stroke="none"><ShapeLabel numeral="III" x={22} y={105} /></g>
          </svg>
        </button>
      </div>
    </fieldset>
  );
}

function Preview() {
  return (
    <svg viewBox="0 0 300 313" className="h-[313px] w-[300px] bg-black" fill="none" stroke="#fff" role="img" aria-label="I型">
      <path d="M59 138l48 25V109l78-18v65l50 18" strokeWidth="3" />
      <path d="M96 64l10 43M172 46l11 43M100 84l77-17M188 91.5h46M190 156.5h44M208.5 91v65M59 138l-18 33M106 165l-16 31M50 153l51 26M97 89l7-10M174 70l6-7M204 87l9 9M204 152l8 8M44 154l12-2M94 180l10-2" />
      <g fill="#0f0" stroke="none" fontSize="24" fontFamily="Liberation Serif">
        <text transform="translate(121 70) rotate(-12)">100</text>
        <text x="222" y="132">170</text>
        <text x="45" y="191">100</text>
      </g>
      <g fill="#fff" stroke="none" fontSize="28" fontWeight="300" fontFamily="Noto Sans CJK SC">
        <text x="73" y="266" fontFamily="Liberation Serif">I</text>
        <text x="84" y="266">型</text>
        <text x="130" y="266">单位：</text>
        <text x="216" y="266" fontSize="25" fontFamily="Liberation Mono">mm</text>
      </g>
    </svg>
  );
}

function Dialog() {
  return (
    <div
      role="dialog"
      aria-label="马凳筋设置"
      className="absolute top-[122px] left-[529px] flex h-[468px] w-[702px] flex-col border border-t-0 border-[#bcc4d6] bg-[#efefef]"
    >
      <div className="-mx-px flex h-[27px] shrink-0 items-center justify-between bg-[#2d80e2] pr-2 pl-2 text-white">
        <span>马凳筋设置</span>
        <button aria-label="关闭"><X className="h-3 w-3" strokeWidth={4} /></button>
      </div>
      <div className="flex gap-[11px] px-4 pt-[21px]">
        <div className="flex w-[335px] flex-col gap-[6px]">
          <ShapePicker />
          <div className="h-[185px] border border-[#c6c9ce] bg-white">
            <table className="w-[309px] table-fixed border-separate border-spacing-0">
              <thead>
                <tr className="h-4 bg-[#efefef]">
                  <th className="w-[7px] border-r border-b border-[#dcdfe4]" />
                  <th className="w-[101px] border-r border-b border-[#bcc4d6]" />
                  <th className="border-r border-b border-[#bcc4d6]" />
                </tr>
              </thead>
              <tbody>
                <tr className="h-[22px] text-[13px]">
                  <td className="border-r border-b border-[#bcc4d6] bg-[#efefef] p-0 pt-px text-[12px]">1</td>
                  <td className="border-r border-b border-[#bcc4d6] p-0 pt-px pl-[3px]">马凳筋信息</td>
                  <td className="border-r border-b border-[#bcc4d6] p-0 pl-[3px] text-[12px]"><RebarSpec /></td>
                </tr>
              </tbody>
            </table>
          </div>
        </div>
        <div className="mt-[9px] h-[333px] w-[320px] rounded-[3px] border border-[#c6c9ce] bg-white p-[9px]">
          <Preview />
        </div>
      </div>
      <div className="mt-[19px] flex justify-between pr-[11px] pl-[11px]">
        <p className="font-['Inter','Noto_Sans_CJK_SC',sans-serif] leading-[17px] whitespace-nowrap">
          一型钢筋输入格式:数量 + 级别 + 直径或级别 + 直径 + 间距 * 间距，如 200B12
          <br />
          或 B12@1000*1000
        </p>
        <div className="flex gap-[6px] pt-1">
          <button className="h-[26px] w-20 rounded-[3px] bg-[#2d80e2] text-white">确定</button>
          <button className="h-[26px] w-20 rounded-[3px] border border-[#bcc4d6] bg-[#fafafa] text-[#333]">取消</button>
        </div>
      </div>
    </div>
  );
}

export default function App() {
  return (
    <div className="relative flex h-screen flex-col overflow-hidden bg-white font-['Noto_Sans','Noto_Sans_CJK_SC',sans-serif] text-[12px] leading-[16px] text-black">
      <Header />
      <Ribbon />
      <FilterBar />
      <div className="flex min-h-0 flex-1 gap-1">
        <Navigator />
        <ComponentList />
        <AttributeTable />
        <Workspace />
      </div>
      <Dialog />
    </div>
  );
}
